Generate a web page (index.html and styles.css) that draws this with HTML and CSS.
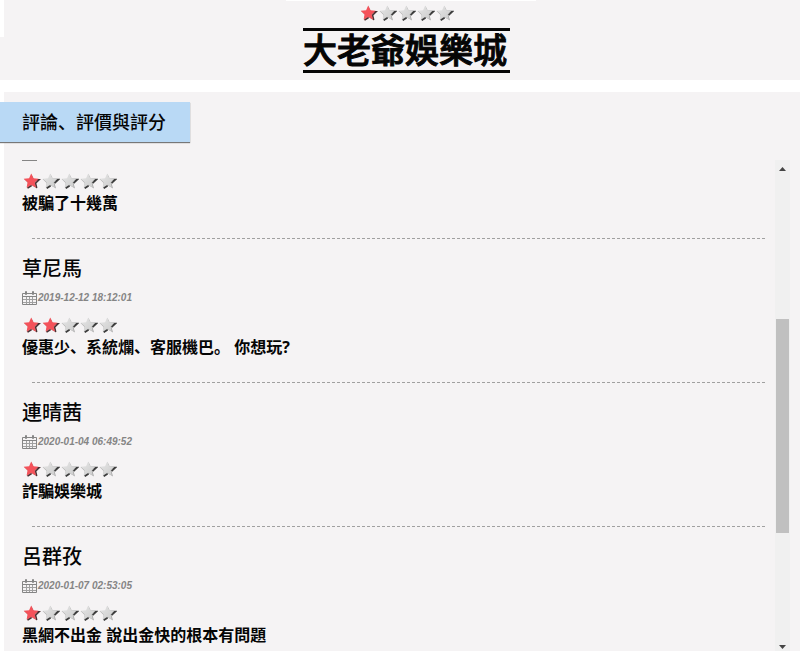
FILE: index.html
```html
<!DOCTYPE html>
<html lang="zh">
<head>
<meta charset="utf-8">
<meta name="viewport" content="width=device-width, initial-scale=1">
<title>大老爺娛樂城</title>
<link rel="stylesheet" href="styles.css">
</head>
<body>
<svg class="defs" aria-hidden="true">
  <defs>
    <linearGradient id="silver" x1="0" y1="0" x2="1" y2="1"><stop offset="0" stop-color="#e6e6e6"/><stop offset="1" stop-color="#cbcbcb"/></linearGradient>
    <symbol id="off" viewBox="0 0 19 20">
      <path fill="#a8a8a8" d="M9.5 3 12 8 17.5 8 13.5 12 15 17.5 10 14.5 5 17.5 5.6 12 1.6 8 7.5 8Z"/>
      <path fill="none" stroke="#3c3c3c" stroke-width="1.6" d="M12 8.6 17.4 8.6 13.6 12.2 M9.6 14.8 5.8 17.2"/>
      <path fill="url(#silver)" d="M9.2 2.5 11.3 7.3 16.6 7.7 12.6 11.3 13.8 16.5 9.2 13.8 4.6 16.5 5.6 11.3 1.7 7.8 7.1 7.3Z"/>
    </symbol>
    <symbol id="on" viewBox="0 0 19 20">
      <path fill="#b77" d="M9.5 3 12 8 17.5 8 13.5 12 15 17.5 10 14.5 5 17.5 6 12 2 8 7.5 8Z"/>
      <path fill="none" stroke="#493033" stroke-width="1.4" d="M12 8.6 17.4 8.6 13.6 12.2 14.8 17 M9.6 14.6 5.6 17.2"/>
      <path fill="#f4525a" d="M9.2 2.5 11.3 7.3 16.6 7.7 12.6 11.3 13.8 16.5 9.2 13.8 4.6 16.5 5.6 11.3 1.7 7.8 7.1 7.3Z"/>
    </symbol>
    <symbol id="calendar" viewBox="0 0 15 16">
      <path fill="none" stroke="#858585" d="M.5 3.5H14.5V14.5H.5ZM.5 6.5H14.5"/>
      <path fill="none" stroke="#a0a0a0" d="M1 9.5H14M1 12.5H14M4.5 7V14M7.5 7V14M10.5 7V14"/>
      <path fill="#f5f3f4" stroke="#858585" d="M3.5 1.5H4.5V4.5H3.5ZM10.5 1.5H11.5V4.5H10.5Z"/>
    </symbol>
  </defs>
</svg>

<header class="hero">
  <div class="stars" role="img" aria-label="1 / 5"><svg><use href="#on"/></svg><svg><use href="#off"/></svg><svg><use href="#off"/></svg><svg><use href="#off"/></svg><svg><use href="#off"/></svg></div>
  <h1>大老爺娛樂城</h1>
</header>

<main class="reviews">
  <h2>評論、評價與評分</h2>
  <div class="panel">
    <div class="list">
      <article class="review">
        <div class="cut"></div>
        <div class="stars" role="img" aria-label="1 / 5"><svg><use href="#on"/></svg><svg><use href="#off"/></svg><svg><use href="#off"/></svg><svg><use href="#off"/></svg><svg><use href="#off"/></svg></div>
        <p>被騙了十幾萬</p>
      </article>
      <article class="review">
        <h3>草尼馬</h3>
        <div class="date"><svg class="cal"><use href="#calendar"/></svg><time>2019-12-12 18:12:01</time></div>
        <div class="stars" role="img" aria-label="2 / 5"><svg><use href="#on"/></svg><svg><use href="#on"/></svg><svg><use href="#off"/></svg><svg><use href="#off"/></svg><svg><use href="#off"/></svg></div>
        <p>優惠少、系統爛、客服機巴。 你想玩?</p>
      </article>
      <article class="review">
        <h3>連晴茜</h3>
        <div class="date"><svg class="cal"><use href="#calendar"/></svg><time>2020-01-04 06:49:52</time></div>
        <div class="stars" role="img" aria-label="1 / 5"><svg><use href="#on"/></svg><svg><use href="#off"/></svg><svg><use href="#off"/></svg><svg><use href="#off"/></svg><svg><use href="#off"/></svg></div>
        <p>詐騙娛樂城</p>
      </article>
      <article class="review">
        <h3>呂群孜</h3>
        <div class="date"><svg class="cal"><use href="#calendar"/></svg><time>2020-01-07 02:53:05</time></div>
        <div class="stars" role="img" aria-label="1 / 5"><svg><use href="#on"/></svg><svg><use href="#off"/></svg><svg><use href="#off"/></svg><svg><use href="#off"/></svg><svg><use href="#off"/></svg></div>
        <p>黑網不出金 說出金快的根本有問題</p>
      </article>
    </div>
    <div class="scrollbar" aria-hidden="true">
      <svg class="arrow" viewBox="0 0 7 4"><path d="M3.5 0 7 4H0Z"/></svg>
      <div class="track"><div class="thumb"></div></div>
      <svg class="arrow" viewBox="0 0 7 4"><path d="M0 0H7L3.5 4Z"/></svg>
    </div>
  </div>
</main>
</body>
</html>
```
FILE: styles.css
```css
* { box-sizing: border-box; }

body {
  margin: 0;
  height: 100vh;
  display: flex;
  flex-direction: column;
  overflow: hidden;
  background: #fff;
  color: #050505;
  font-family: "Open Sans", "Noto Sans CJK SC", sans-serif;
}

h1, h2, h3, p { margin: 0; }

.defs { position: absolute; width: 0; height: 0; }

.hero {
  display: flex;
  flex-direction: column;
  align-items: center;
  padding: 3px 0 7px 13px;
  margin-bottom: 12px;
  background:
    linear-gradient(#fff, #fff) 0 0 / 4px 37px no-repeat,
    linear-gradient(#fff, #fff) 52% 0 / 250px 1px no-repeat,
    #f5f3f4;
}

.hero h1 {
  margin-top: 5px;
  padding-right: 3px;
  border-top: 3px solid #050505;
  border-bottom: 3px solid #050505;
  font-size: 34px;
  line-height: 39px;
  font-weight: 500;
  -webkit-text-stroke: 1px #050505;
}

.stars { display: flex; height: 20px; }
.stars svg { width: 19px; height: 20px; }

.reviews {
  flex: 1;
  min-height: 0;
  display: flex;
  flex-direction: column;
  padding-top: 10px;
  background: linear-gradient(90deg, #fff 4px, #f5f3f4 4px);
}

.reviews h2 {
  align-self: flex-start;
  padding: 0 24px 0 22px;
  background: #b9d9f5;
  box-shadow: 0 1px 1px #777;
  font-size: 18px;
  line-height: 40px;
  font-weight: 500;
}

.panel {
  flex: 1;
  min-height: 0;
  display: flex;
  margin-top: 18px;
  padding: 0 10px 0 22px;
}

.list { flex: 1; min-width: 0; overflow: hidden; }

.review {
  padding: 16px 0 24px;
  background: repeating-linear-gradient(90deg, #a0a0a0 0 3px, transparent 3px 5px) 10px 100% / calc(100% - 20px) 1px no-repeat;
}

.review:first-child { padding-top: 0; }

/* lower edge of the scrolled-off calendar icon */
.cut {
  width: 15px;
  height: 1px;
  margin-bottom: 10px;
  background: #858585;
}

.review h3 {
  font-size: 20px;
  line-height: 28px;
  font-weight: 500;
}

.date {
  display: flex;
  align-items: center;
  gap: 1px;
  height: 20px;
  margin: 5px 0 7px;
  color: #858585;
  font: italic bold 10px/20px "Liberation Sans", sans-serif;
}

.cal { flex: none; width: 15px; height: 16px; }

.review p {
  font-size: 16px;
  line-height: 24px;
  font-weight: 700;
}

.scrollbar {
  display: flex;
  flex-direction: column;
  align-items: center;
  width: 15px;
  padding: 7px 0 2px;
  background: #f0f0f0;
}

.arrow { flex: none; width: 7px; height: 4px; fill: #444; }

.track {
  flex: 1;
  display: flex;
  flex-direction: column;
  width: 13px;
}

.track::before { content: ""; flex: 148; }
.track::after { content: ""; flex: 112; }
.thumb { flex: 213; background: #c0c0c0; }
```
